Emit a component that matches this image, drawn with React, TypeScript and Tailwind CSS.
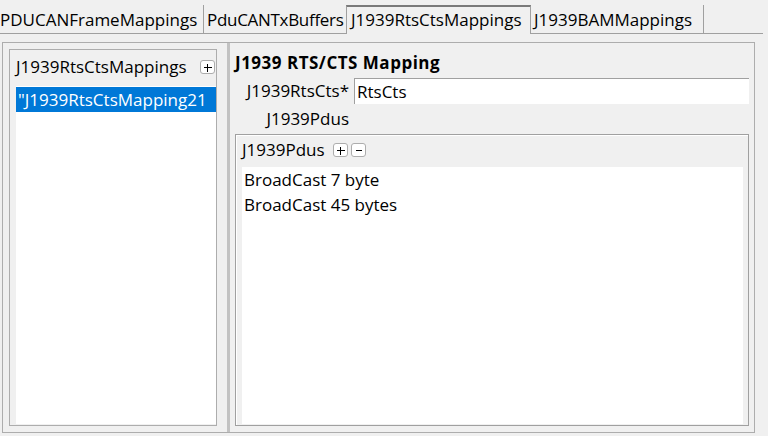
import { type ReactNode } from 'react';

type TabT = { label: string; width: string; active?: boolean };

const TABS: TabT[] = [
  { label: 'PDUCANFrameMappings', width: 'w-[204px]' },
  { label: 'PduCANTxBuffers', width: 'w-[142px]' },
  { label: 'J1939RtsCtsMappings', width: 'w-[185px]', active: true },
  { label: 'J1939BAMMappings', width: 'w-[173px]' },
];

const PDUS = ['BroadCast 7 byte', 'BroadCast 45 bytes'];

function MiniButton({ kind }: { kind: 'add' | 'remove' }) {
  return (
    <span className="flex h-[14px] w-[15px] items-center justify-center rounded-[3px] border border-[#adadad] bg-white">
      <svg width="9" height="9" viewBox="0 0 9 9" shapeRendering="crispEdges">
        {kind === 'add' ? (
          <path d="M0.5 4.5h8M4.5 0.5v8" stroke="#000" strokeWidth="1" />
        ) : (
          <path d="M1.5 4.5h6" stroke="#000" strokeWidth="1" />
        )}
      </svg>
    </span>
  );
}

function Tab({ tab }: { tab: TabT }) {
  if (tab.active) {
    return (
      <div
        className={`${tab.width} h-[29px] shrink-0 overflow-hidden border-x border-t-2 border-x-[#a0a0a0] border-t-[#7a7a7a] pl-[4px] pt-[2px] leading-[22px]`}
      >
        {tab.label}
      </div>
    );
  }
  return (
    <div
      className={`${tab.width} h-[29px] shrink-0 overflow-hidden border-b border-b-[#a0a0a0] pl-[3px] pt-[4px] leading-[22px] [&:nth-child(2)]:tracking-[-0.3px] [&:not(:nth-child(2))]:border-r [&:not(:nth-child(2))]:border-r-[#a0a0a0] first:pl-0`}
    >
      {tab.label}
    </div>
  );
}

function FormRow({ label, children }: { label: string; children?: ReactNode }) {
  return (
    <div className="flex items-center">
      <div className="w-[114px] shrink-0 whitespace-nowrap text-right leading-[22px]">{label}</div>
      <div className="ml-[5px] flex-1">{children}</div>
    </div>
  );
}

export default function App() {
  return (
    <div className="h-[436px] w-[768px] overflow-hidden bg-[#f0f0f0] font-['Open_Sans',sans-serif] text-[17px] text-black">
      {/* tab strip */}
      <div className="flex h-[34px] items-end whitespace-nowrap">
        {TABS.map(tab => (
          <Tab key={tab.label} tab={tab} />
        ))}
        <div className="h-[29px] w-[59px] shrink-0 border-b border-b-[#a0a0a0]" />
      </div>

      <div className="ml-[2px] mt-[8px] flex h-[391px] w-[753px] border border-[#adadad]">
        {/* mapping list */}
        <div className="flex w-[224px] shrink-0 p-[6px] pr-[10px]">
          <div className="flex w-[208px] flex-col border border-[#adadad] pb-[1px] pl-[6px]">
            <div className="flex items-center pt-[6px] pr-[1px]">
              <span className="whitespace-nowrap leading-[22px]">J1939RtsCtsMappings</span>
              <span className="ml-auto">
                <MiniButton kind="add" />
              </span>
            </div>
            <div className="mt-[8px] flex-1 overflow-hidden bg-white pt-[1px]">
              <div className="h-[25px] overflow-hidden whitespace-nowrap bg-[#0078d7] pl-[2px] leading-[25px] text-white">
                "J1939RtsCtsMapping21
              </div>
            </div>
          </div>
        </div>

        {/* splitter */}
        <div className="w-[3px] shrink-0 bg-[#c2c2c2]" />

        {/* detail editor */}
        <div className="flex flex-1 flex-col pb-[6px] pl-[5px] pr-[5px] pt-[9px]">
          <div className="font-bold leading-[22px] tracking-[0.5px]">J1939 RTS/CTS Mapping</div>
          <div className="mt-[4px]">
            <FormRow label="J1939RtsCts*">
              <div className="h-[26px] border-l border-t border-[#a0a0a0] bg-white pl-[2px] leading-[25px]">RtsCts</div>
            </FormRow>
          </div>
          <div className="h-[30px] pt-[4px]">
            <FormRow label="J1939Pdus" />
          </div>
          <div className="flex flex-1 flex-col border border-[#a0a0a0] pb-[1px] pl-[6px] pr-[5px] shadow-[inset_1px_1px_0_#fff]">
            <div className="flex items-center gap-[3px] pt-[4px]">
              <span className="mr-[5px] leading-[22px]">J1939Pdus</span>
              <MiniButton kind="add" />
              <MiniButton kind="remove" />
            </div>
            <div className="mt-[6px] flex-1 bg-white">
              {PDUS.map(pdu => (
                <div key={pdu} className="h-[25px] pl-[2px] leading-[25px]">
                  {pdu}
                </div>
              ))}
            </div>
          </div>
        </div>
      </div>
    </div>
  );
}
